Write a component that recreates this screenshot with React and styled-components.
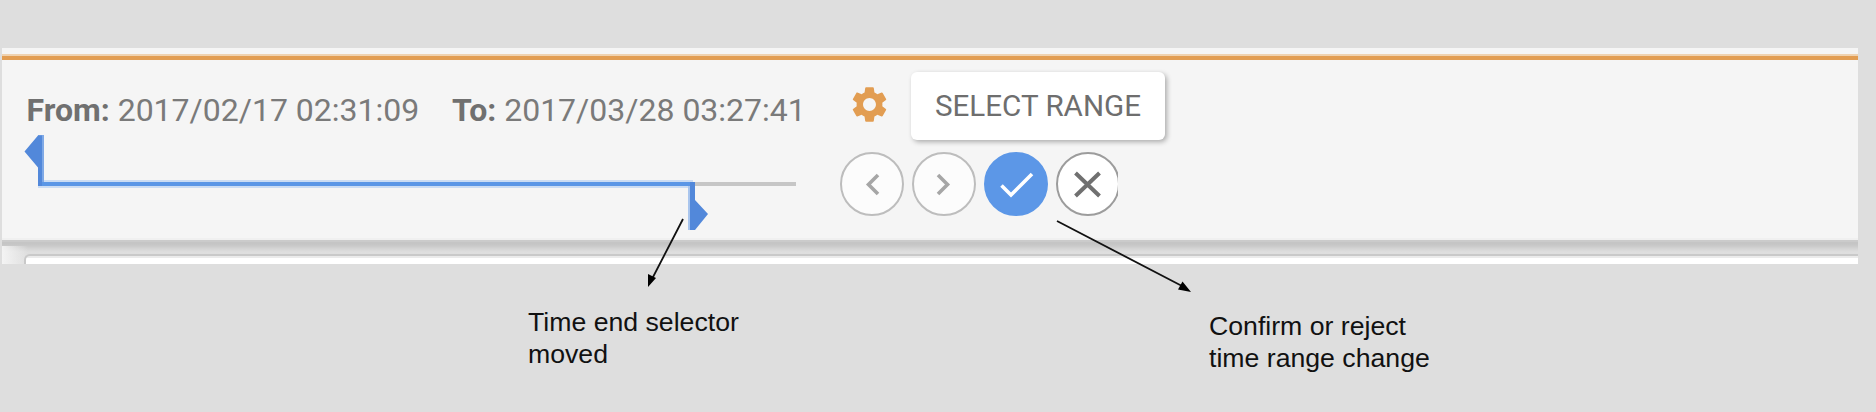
import React from "react";
import styled, { createGlobalStyle } from "styled-components";
import { MdSettings } from "react-icons/md";

const GlobalStyle = createGlobalStyle`
  *, *::before, *::after { box-sizing: border-box; }
  body { margin: 0; background: #dedede; }
`;

const Page = styled.main`
  position: relative;
  display: flex;
  flex-direction: column;
  width: 1876px;
  height: 412px;
  padding: 48px 0 0 2px;
  overflow: hidden;
  background: #dedede;
`;

const Panel = styled.section`
  flex: none;
  width: 1856px;
  height: 216px;
  overflow: hidden;
  background: #f4f4f4;
  font-family: Roboto, "Liberation Sans", sans-serif;
  color: #7a7a7a;
`;

const Toolbar = styled.div`
  position: relative;
  height: 192px;
  padding-top: 6px;
  background: #f5f5f5;
  border-bottom: 2px solid #f0f0f0;
`;

const Accent = styled.div`
  height: 6px;
  border-top: 2px solid #efd2b0;
  background: #e29d52;
`;

const ToolbarBody = styled.div`
  display: flex;
`;

const RangeColumn = styled.div`
  width: 836px;
  padding: 30px 0 0 22px;
`;

const Dates = styled.div`
  display: flex;
  height: 42px;
  line-height: 40px;
`;

const DateField = styled.div`
  width: ${(p) => p.$width}px;
  padding-left: ${(p) => p.$inset}px;
  font-size: 32px;
  white-space: nowrap;
`;

const DateLabel = styled.b`
  font-weight: 700;
  color: #707070;
`;

const Slider = styled.div`
  position: relative;
  display: flex;
  align-items: center;
  height: 96px;
  padding: 8px 0 0 14px;
`;

const Selected = styled.div`
  width: 655px;
  height: 8px;
  border: solid #cbdcf3;
  border-width: 2px 0;
  background: #5a96e6;
`;

const Remaining = styled.div`
  width: 103px;
  height: 4px;
  background: #c6c6c6;
`;

const Handle = styled.svg`
  position: absolute;
  left: ${(p) => p.$left}px;
  top: ${(p) => p.$top}px;
`;

const Controls = styled.div`
  display: flex;
  flex-direction: column;
  gap: 12px;
  padding-top: 12px;
`;

const ActionRow = styled.div`
  display: flex;
  align-items: center;
  height: 68px;
  padding-left: 10px;
  gap: 20px;
`;

const Gear = styled(MdSettings)`
  width: 43px;
  height: 43px;
  margin-top: -4px;
  color: #e29d52;
`;

const RangeButton = styled.button`
  width: 254px;
  height: 68px;
  padding: 0 0 1px;
  border: 0;
  border-radius: 6px;
  background: #fff;
  box-shadow: 2px 2px 5px rgba(0, 0, 0, 0.3);
  color: #6e6e6e;
  font: 400 29.6px/40px Roboto, "Liberation Sans", sans-serif;
  white-space: nowrap;
`;

const ButtonRow = styled.div`
  display: flex;
  gap: 8px;
  width: 280px;
  padding-left: 2px;
  overflow: hidden;
`;

const RoundButton = styled.button`
  flex: none;
  width: 64px;
  height: 64px;
  padding: 0;
  border: 2px solid ${(p) => p.$edge};
  border-radius: 50%;
  background: ${(p) => p.$fill};
  color: ${(p) => p.$ink};

  svg { display: block; }
`;

const Backdrop = styled.div`
  height: 24px;
  padding: 14px 0 0 22px;
  background:
    linear-gradient(to right, rgba(246, 246, 246, 0.9), rgba(244, 244, 244, 0) 26px) 0 6px / 26px 18px no-repeat,
    linear-gradient(#cbcbcb 0 2px, #c5c5c5 2px 4px, #cacaca 6px, #d6d6d6 9px, #dedede 12px, #e0e0e0);
`;

const Card = styled.div`
  height: 20px;
  border: 2px solid #c9c9c9;
  border-right: 0;
  border-radius: 6px 0 0 6px;
  background: linear-gradient(#ebebeb 0 2px, #fff 2px);
`;

const Captions = styled.div`
  display: flex;
  padding-left: 526px;
`;

const Caption = styled.p`
  width: ${(p) => p.$width}px;
  margin: ${(p) => p.$drop}px 0 0;
  font: 26.67px/32px "Liberation Sans", Arial, sans-serif;
  color: #111;
  white-space: nowrap;
`;

const Arrows = styled.svg`
  position: absolute;
  left: 0;
  top: 0;
  pointer-events: none;
`;

function Glyph({ d, width }) {
  return (
    <svg width="60" height="60" viewBox="0 0 60 60" fill="none" stroke="currentColor" strokeWidth={width}>
      <path d={d} />
    </svg>
  );
}

export default function App() {
  return (
    <>
      <GlobalStyle />
      <Page>
        <Panel>
          <Toolbar>
            <Accent />
            <ToolbarBody>
              <RangeColumn>
                <Dates>
                  <DateField $width={428} $inset={2.5}>
                    <DateLabel>From:</DateLabel> 2017/02/17 02:31:09
                  </DateField>
                  <DateField $width={360} $inset={0}>
                    <DateLabel>To:</DateLabel> 2017/03/28 03:27:41
                  </DateField>
                </Dates>
                <Slider>
                  <Selected />
                  <Remaining />
                  <Handle $left={0} $top={2} width="22" height="54" viewBox="0 0 22 54">
                    <path d="M14 1H20V48H18V52H14Z" fill="#7fa9e6" />
                    <path d="M14 1.5H18V52H14V33.5L0.5 17.5Z" fill="#5288da" />
                  </Handle>
                  <Handle $left={664} $top={50} width="22" height="50" viewBox="0 0 22 50">
                    <path d="M0 4H3V48H0Z" fill="#a9c5ed" />
                    <path d="M2 0H7V18L20 32L7 48H2Z" fill="#5288da" />
                  </Handle>
                </Slider>
              </RangeColumn>
              <Controls>
                <ActionRow>
                  <Gear />
                  <RangeButton>SELECT RANGE</RangeButton>
                </ActionRow>
                <ButtonRow>
                  <RoundButton $edge="#bdbdbd" $fill="#fcfcfc" $ink="#a6a6a6" aria-label="Previous">
                    <Glyph d="M36 21L26.5 30.5L36 40" width="3.6" />
                  </RoundButton>
                  <RoundButton $edge="#bdbdbd" $fill="#fcfcfc" $ink="#a6a6a6" aria-label="Next">
                    <Glyph d="M24 21L33.5 30.5L24 40" width="3.6" />
                  </RoundButton>
                  <RoundButton $edge="#5c97e7" $fill="#5c97e7" $ink="#fff" aria-label="Confirm">
                    <Glyph d="M15.5 31.5L25 41L46 20" width="3.6" />
                  </RoundButton>
                  <RoundButton $edge="#9c9c9c" $fill="#fff" $ink="#707070" aria-label="Reject">
                    <Glyph d="M17.5 19L41.5 42M41.5 19L17.5 42" width="4" />
                  </RoundButton>
                </ButtonRow>
              </Controls>
            </ToolbarBody>
          </Toolbar>
          <Backdrop>
            <Card />
          </Backdrop>
        </Panel>
        <Captions>
          <Caption $width={681} $drop={42}>
            Time end selector
            <br />
            moved
          </Caption>
          <Caption $width={240} $drop={46}>
            Confirm or reject
            <br />
            time range change
          </Caption>
        </Captions>
        <Arrows width="1876" height="412" viewBox="0 0 1876 412">
          <path d="M683 219L652 279M1057 221L1182 286" stroke="#111" strokeWidth="1.8" />
          <path d="M648 287V274L656 278ZM1191 292L1182.5 281.5L1178 289.5Z" fill="#000" />
        </Arrows>
      </Page>
    </>
  );
}
